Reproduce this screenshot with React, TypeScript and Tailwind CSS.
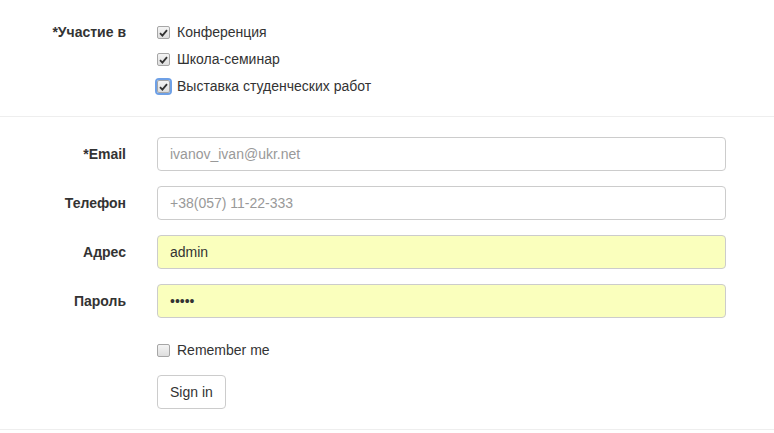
import React from "react";

// ===== Native-looking checkbox =====
function Box({ checked, focus }: { checked?: boolean; focus?: boolean }) {
  return (
    <span
      className={`mt-[4px] mr-[7px] flex h-[13px] w-[13px] shrink-0 items-center justify-center rounded-[2px] border border-[#a6a6a6] bg-gradient-to-b from-[#f4f4f4] to-[#dedede] ${
        focus ? "outline outline-2 outline-[#6ea0e6] outline-offset-0" : ""
      }`}
    >
      {checked && (
        <svg width="9" height="8" viewBox="0 0 9 8">
          <path d="M1 4.2 L3.4 6.6 L8 1.2" fill="none" stroke="#333" strokeWidth="1.8" />
        </svg>
      )}
    </span>
  );
}

function CheckLine({ label, checked, focus }: { label: string; checked?: boolean; focus?: boolean }) {
  return (
    <div className="flex h-[27px] items-start">
      <Box checked={checked} focus={focus} />
      <span className="leading-[20px]">{label}</span>
    </div>
  );
}

// ===== Form row =====
function Row({ label, children }: { label: string; children: React.ReactNode }) {
  return (
    <div className="flex">
      <div className="w-[126px] shrink-0 text-right font-bold leading-[34px]">{label}</div>
      <div className="ml-[31px] mr-[48px] flex-1">{children}</div>
    </div>
  );
}

function Field({ value, placeholder, filled }: { value?: string; placeholder?: string; filled?: boolean }) {
  return (
    <div
      className={`h-[34px] rounded-[4px] border border-[#ccc] px-[12px] leading-[32px] ${
        filled ? "bg-[#faffbd]" : "bg-white"
      }`}
    >
      {value ? <span className="text-[#333]">{value}</span> : <span className="text-[#999]">{placeholder}</span>}
    </div>
  );
}

export default function App() {
  return (
    <div className="min-h-[433px] w-[774px] bg-white text-[14px] text-[#333] [font-family:'Liberation_Sans',Arial,sans-serif]">
      {/* Participation */}
      <div className="flex pt-[22px]">
        <div className="w-[126px] shrink-0 text-right font-bold leading-[20px]">*Участие в</div>
        <div className="ml-[31px] flex flex-col">
          <CheckLine label="Конференция" checked />
          <CheckLine label="Школа-семинар" checked />
          <div className="flex h-[20px] items-start">
            <Box checked focus />
            <span className="leading-[20px]">Выставка студенческих работ</span>
          </div>
        </div>
      </div>

      <div className="mt-[20px] border-t border-[#eee]" />

      {/* Contact fields */}
      <div className="mt-[20px] flex flex-col gap-[15px]">
        <Row label="*Email">
          <Field placeholder="ivanov_ivan@ukr.net" />
        </Row>
        <Row label="Телефон">
          <Field placeholder="+38(057) 11-22-333" />
        </Row>
        <Row label="Адрес">
          <Field value="admin" filled />
        </Row>
        <Row label="Пароль">
          <Field value="•••••" filled />
        </Row>
      </div>

      <div className="ml-[157px] mt-[22px] flex h-[20px] items-start">
        <Box />
        <span className="leading-[20px]">Remember me</span>
      </div>

      <div className="ml-[157px] mt-[15px]">
        <button className="h-[34px] rounded-[4px] border border-[#ccc] bg-white px-[12px] leading-[20px] text-[#333]">
          Sign in
        </button>
      </div>

      <div className="mt-[20px] border-t border-[#eee]" />
    </div>
  );
}
